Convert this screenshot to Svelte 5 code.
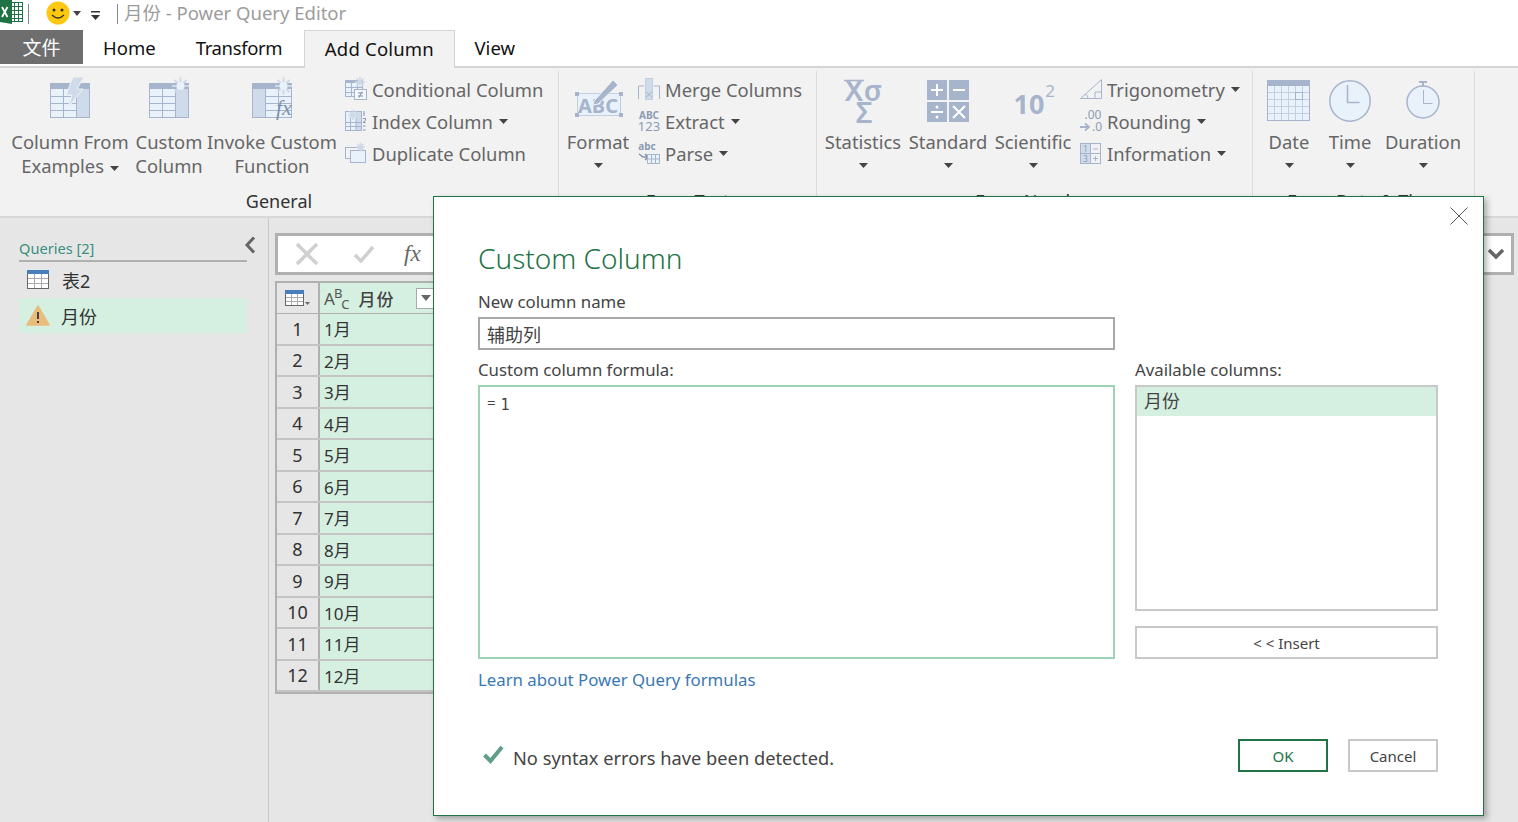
<script>
  const rows = ['1月', '2月', '3月', '4月', '5月', '6月', '7月', '8月', '9月', '10月', '11月', '12月']
</script>

{#snippet tableIcon(kind)}
  <svg class="big-icon" width="48" height="50" viewBox="0 0 48 50">
    <rect x="4.500" y="6.500" width="39" height="34" fill="#e9f1fb" stroke="#a6b4cc" />
    <rect x="4" y="6" width="40" height="6" fill="#a6b4cc" />
    {#if kind === 'fn'}
      <rect x="5" y="12" width="12" height="28" fill="#cfdaea" />
      <path d="M17.500 12v28M30.500 12v28M17 19.500h26M17 26.500h26M17 33.500h26" stroke="#a6b4cc" fill="none" />
    {:else}
      <rect x="31" y="12" width="12" height="28" fill="#cfdaea" />
      <path d="M17.500 12v28M30.500 12v28M5 19.500h26M5 26.500h26M5 33.500h26" stroke="#a6b4cc" fill="none" />
    {/if}
    {#if kind === 'bolt'}
      <path d="M27 0h11l-7 12h6L22 31l4-13h-6z" fill="#cfdaea" stroke="#f2f2f2" />
    {:else}
      <g stroke="#cfd8e6" stroke-width="2" fill="none">
        <path d="M27 9h17M35.500 0.500v17M29.500 3l12 12M41.500 3l-12 12" />
      </g>
      <circle cx="35.500" cy="9" r="4" fill="#e9f1fb" />
    {/if}
  </svg>
{/snippet}

{#snippet caret()}
  <svg class="caret" width="9" height="5" viewBox="0 0 9 5"><path d="M0 0h9L4.500 5z" fill="#444" /></svg>
{/snippet}

<div class="page">
  <header class="titlebar">
    <svg class="excel" width="24" height="25" viewBox="0 0 24 25">
      <rect x="8.500" y="2.500" width="14" height="19" fill="#fff" stroke="#1f7244" />
      <path d="M9 6.500h13M9 10.500h13M9 14.500h13M9 18.500h13M14.500 3v18M18.500 3v18" stroke="#1f7244" />
      <path d="M0 0h12v24l-12-2z" fill="#1f7244" />
      <path d="M2 7l5.500 10M7.500 7L2 17" stroke="#fff" stroke-width="1.800" />
    </svg>
    <i class="qsep"></i>
    <svg class="smile" width="24" height="24" viewBox="0 0 24 24">
      <circle cx="12" cy="12" r="11.500" fill="#fdc80f" />
      <circle cx="8" cy="9" r="1.500" fill="#333" />
      <circle cx="16" cy="9" r="1.500" fill="#333" />
      <path d="M6 14q6 6 12 0" fill="none" stroke="#333" stroke-width="1.300" />
    </svg>
    <svg class="qcaret" width="8" height="5" viewBox="0 0 8 5"><path d="M0 0h8L4 5z" fill="#444" /></svg>
    <svg class="qmore" width="9" height="9" viewBox="0 0 9 9"><path d="M0 0h9v1.500H0zM0 4h9L4.500 9z" fill="#333" /></svg>
    <i class="qsep two"></i>
    <span class="title">月份 - Power Query Editor</span>
  </header>

  <nav class="tabs">
    <div class="tab file">文件</div>
    <div class="tab">Home</div>
    <div class="tab transform">Transform</div>
    <div class="tab active">Add Column</div>
    <div class="tab">View</div>
  </nav>

  <section class="ribbon">
    <div class="group general">
      <div class="group-body">
        <div class="big b-example">
          {@render tableIcon('bolt')}
          <div class="big-label"><span>Column From</span><span>Examples {@render caret()}</span></div>
        </div>
        <div class="big b-custom">
          {@render tableIcon('star')}
          <div class="big-label"><span>Custom</span><span>Column</span></div>
        </div>
        <div class="big b-invoke">
          <div class="fx-wrap">
            {@render tableIcon('fn')}
            <span class="fx">fx</span>
          </div>
          <div class="big-label"><span>Invoke Custom</span><span>Function</span></div>
        </div>
        <div class="small-col">
          <div class="small">
            <svg width="22" height="24" viewBox="0 0 22 24">
              <rect x=".5" y="3.500" width="17" height="16" fill="#e9f1fb" stroke="#a6b4cc" />
              <rect x="0" y="3" width="18" height="3" fill="#a6b4cc" />
              <path d="M6.500 6v13M12.500 6v13M1 10.500h16M1 15.500h16" stroke="#a6b4cc" />
              <path d="M10 5h10M15 0v10M11.500 1.500l7 7M18.500 1.500l-7 7" stroke="#cfd8e6" stroke-width="1.500" />
              <rect x="9.500" y="12.500" width="12" height="10" fill="#f4f7fc" stroke="#a6b4cc" />
              <path d="M13 16h5M13 19h5M17 14.500l-3 6" stroke="#8292ad" fill="none" />
            </svg>
            <span>Conditional Column</span>
          </div>
          <div class="small">
            <svg width="22" height="24" viewBox="0 0 22 24">
              <rect x=".5" y="2.500" width="16" height="19" fill="#e9f1fb" stroke="#a6b4cc" />
              <rect x="11" y="3" width="5" height="18" fill="#cfdaea" />
              <path d="M5.500 8v13M11 8v13M1 13.500h15M1 17.500h15" stroke="#a6b4cc" />
              <path d="M3 6h10M8 1v10M4.500 2.500l7 7M11.500 2.500l-7 7" stroke="#cfd8e6" stroke-width="1.500" />
              <path d="M19 2v5M18 17h2.500M18 21h2.500M18 9.500h2.500v2l-2.500 2h2.500" stroke="#8292ad" fill="none" />
            </svg>
            <span>Index Column</span>{@render caret()}
          </div>
          <div class="small">
            <svg width="22" height="24" viewBox="0 0 22 24">
              <rect x=".5" y="6.500" width="15" height="11" fill="#f2f2f2" stroke="#a6b4cc" />
              <rect x="5.500" y="9.500" width="15" height="12" fill="#e9f1fb" stroke="#a6b4cc" />
              <path d="M11 6h9M15.500 1.500v9M12.500 3l6 6M18.500 3l-6 6" stroke="#cfd8e6" stroke-width="1.500" />
            </svg>
            <span>Duplicate Column</span>
          </div>
        </div>
      </div>
      <div class="group-label">General</div>
    </div>

    <div class="group text">
      <div class="group-body">
        <div class="big b-format">
          <svg class="big-icon" width="48" height="50" viewBox="0 0 48 50">
            <rect x="3.500" y="16.500" width="43" height="22" fill="#e9f1fb" stroke="#c3cfe1" />
            <path d="M1 15h4v4H1zM45 15h4v4h-4zM1 36h4v4H1zM45 36h4v4h-4z" fill="#a6b4cc" />
            <text x="24" y="36" class="abc">ABC</text>
            <path d="M20 24L39 3l5 5-20 19-5 1z" fill="#a6b4cc" stroke="#f2f2f2" />
          </svg>
          <div class="big-label"><span>Format</span><span class="drop">{@render caret()}</span></div>
        </div>
        <div class="small-col">
          <div class="small">
            <svg width="22" height="24" viewBox="0 0 22 24">
              <rect x="7.500" y="1.500" width="7" height="21" fill="#cfdaea" stroke="#c3cfe1" />
              <path d="M6 9H.5v13M16 9h5.500v13M8 15l3 2.500L8 20M14 15l-3 2.500 3 2.500" stroke="#a6b4cc" fill="none" />
            </svg>
            <span>Merge Columns</span>
          </div>
          <div class="small">
            <svg width="22" height="24" viewBox="0 0 22 24">
              <text x="11" y="10" class="mini">ABC</text>
              <text x="11" y="22" class="mini-num">123</text>
            </svg>
            <span>Extract</span>{@render caret()}
          </div>
          <div class="small">
            <svg width="22" height="24" viewBox="0 0 22 24">
              <text x="9" y="9" class="mini lower">abc</text>
              <path d="M1 13l4 3h5M7 13l3 3-3 3" stroke="#8292ad" stroke-width="1.500" fill="none" />
              <rect x="9.500" y="13.500" width="12" height="9" fill="#e9f1fb" stroke="#a6b4cc" />
              <path d="M13.500 14v8M17.500 14v8M10 18h11" stroke="#a6b4cc" />
            </svg>
            <span>Parse</span>{@render caret()}
          </div>
        </div>
      </div>
      <div class="group-label">From Text</div>
    </div>

    <div class="group number">
      <div class="group-body">
        <div class="big b-stat">
          <svg class="big-icon" width="48" height="50" viewBox="0 0 48 50">
            <path d="M5 3.500h20" stroke="#a6b4cc" stroke-width="1.500" />
            <text x="15" y="24" class="xs">X</text>
            <text x="34" y="24" class="xs">σ</text>
            <text x="25" y="46" class="xs">Σ</text>
          </svg>
          <div class="big-label"><span>Statistics</span><span class="drop">{@render caret()}</span></div>
        </div>
        <div class="big b-std">
          <svg class="big-icon" width="48" height="50" viewBox="0 0 48 50">
            <path d="M3 3h20v20H3zM25 3h20v20H25zM3 25h20v20H3zM25 25h20v20H25z" fill="#a6b4cc" />
            <path d="M7 13h12M13 7v12M29 13h12M7 35h12M29 29l12 12M41 29L29 41" stroke="#fff" stroke-width="2" />
            <circle cx="13" cy="30" r="1.500" fill="#fff" />
            <circle cx="13" cy="40" r="1.500" fill="#fff" />
          </svg>
          <div class="big-label"><span>Standard</span><span class="drop">{@render caret()}</span></div>
        </div>
        <div class="big b-sci">
          <svg class="big-icon" width="48" height="50" viewBox="0 0 48 50">
            <text x="20" y="37" class="ten">10</text>
            <text x="41" y="20" class="two">2</text>
          </svg>
          <div class="big-label"><span>Scientific</span><span class="drop">{@render caret()}</span></div>
        </div>
        <div class="small-col">
          <div class="small">
            <svg width="22" height="24" viewBox="0 0 22 24">
              <path d="M21.500 2.500v19H.5z" fill="#f2f2f2" stroke="#a6b4cc" />
              <path d="M15 21v-6h6.500M5 17q3 1 3 4" stroke="#a6b4cc" fill="none" />
            </svg>
            <span>Trigonometry</span>{@render caret()}
          </div>
          <div class="small">
            <svg width="22" height="24" viewBox="0 0 22 24">
              <text x="13" y="10" class="dec">.00</text>
              <text x="17" y="22" class="dec">.0</text>
              <path d="M0 18h8M5 14.500l4 3.500-4 3.500" stroke="#a6b4cc" stroke-width="1.800" fill="none" />
            </svg>
            <span>Rounding</span>{@render caret()}
          </div>
          <div class="small">
            <svg width="22" height="24" viewBox="0 0 22 24">
              <rect x=".5" y="2.500" width="20" height="20" fill="#f2f2f2" stroke="#a6b4cc" />
              <rect x="1" y="3" width="9" height="19" fill="#cfdaea" />
              <path d="M10.500 3v19M1 12.500h19M13 8h5M13 17.500h5M15.500 15v5" stroke="#a6b4cc" />
              <text x="5.500" y="10.500" class="tiny">1</text>
              <text x="5.500" y="20.500" class="tiny">3</text>
            </svg>
            <span>Information</span>{@render caret()}
          </div>
        </div>
      </div>
      <div class="group-label">From Number</div>
    </div>

    <div class="group date">
      <div class="group-body">
        <div class="big b-date">
          <svg class="big-icon" width="48" height="50" viewBox="0 0 48 50">
            <rect x="2.500" y="3.500" width="42" height="40" fill="#e9f1fb" stroke="#a6b4cc" />
            <rect x="2" y="3" width="43" height="6" fill="#a6b4cc" />
            <path d="M9.500 9v34M16.500 9v34M23.500 9v34M30.500 9v34M37.500 9v34M3 15.500h41M3 22.500h41M3 29.500h41M3 36.500h41" stroke="#c3cfe1" />
            <rect x="30.500" y="15.500" width="7" height="7" fill="none" stroke="#a6b4cc" />
          </svg>
          <div class="big-label"><span>Date</span><span class="drop">{@render caret()}</span></div>
        </div>
        <div class="big b-time">
          <svg class="big-icon" width="48" height="50" viewBox="0 0 48 50">
            <circle cx="24" cy="24" r="20.200" fill="#e9f1fb" stroke="#a6b4cc" stroke-width="1.500" />
            <path d="M21.500 8v17.500h12" fill="none" stroke="#a6b4cc" stroke-width="1.500" />
          </svg>
          <div class="big-label"><span>Time</span><span class="drop">{@render caret()}</span></div>
        </div>
        <div class="big b-dur">
          <svg class="big-icon" width="48" height="50" viewBox="0 0 48 50">
            <circle cx="24" cy="25" r="16" fill="#e9f1fb" stroke="#a6b4cc" stroke-width="1.500" />
            <path d="M20 5h8M24 5v5" stroke="#a6b4cc" stroke-width="2" />
            <path d="M24.500 13v13.500h9" fill="none" stroke="#a6b4cc" />
          </svg>
          <div class="big-label"><span>Duration</span><span class="drop">{@render caret()}</span></div>
        </div>
      </div>
      <div class="group-label">From Date &amp; Time</div>
    </div>
  </section>

  <main class="workspace">
    <aside class="queries">
      <div class="queries-head">
        <span>Queries [2]</span>
        <svg width="12" height="18" viewBox="0 0 12 18"><path d="M10 1.500L3 9l7 7.500" fill="none" stroke="#666" stroke-width="3" /></svg>
      </div>
      <div class="query">
        <svg width="23" height="19" viewBox="0 0 23 19">
          <rect x=".5" y=".5" width="21" height="18" fill="#fff" stroke="#666" />
          <rect x="0" y="0" width="22" height="4" fill="#4a7ebb" />
          <path d="M7.500 4v14M14.500 4v14M1 8.500h20M1 13.500h20" stroke="#aaa" />
        </svg>
        <span>表2</span>
      </div>
      <div class="query selected">
        <svg width="24" height="21" viewBox="0 0 24 21">
          <path d="M12 1L23 20H1z" fill="#eabc7c" stroke="#eabc7c" stroke-linejoin="round" stroke-width="1.500" />
          <path d="M12 7v7M12 16v2" stroke="#444" stroke-width="2" />
        </svg>
        <span>月份</span>
      </div>
    </aside>

    <div class="content">
      <div class="formula-bar">
        <svg width="24" height="22" viewBox="0 0 24 22"><path d="M2 1l20 20M22 1L2 21" stroke="#d0d0d0" stroke-width="3.500" /></svg>
        <svg class="fb-check" width="22" height="18" viewBox="0 0 22 18"><path d="M2 10l6 6L20 2" fill="none" stroke="#d0d0d0" stroke-width="3.500" /></svg>
        <span class="fb-fx">fx</span>
        <span class="fb-grow"></span>
        <svg class="fb-down" width="18" height="12" viewBox="0 0 18 12"><path d="M2 2l7 7 7-7" fill="none" stroke="#666" stroke-width="3.500" /></svg>
      </div>

      <div class="grid">
        <div class="grid-row head">
          <div class="num">
            <svg width="25" height="17" viewBox="0 0 25 17">
              <rect x=".5" y=".5" width="18" height="15" fill="#fff" stroke="#666" />
              <rect x="0" y="0" width="19" height="4" fill="#4a7ebb" />
              <path d="M6.500 4v11M12.500 4v11M1 7.500h17M1 11.500h17" stroke="#aaa" />
              <path d="M20 12h5l-2.500 3z" fill="#666" />
            </svg>
          </div>
          <div class="cell head-cell">
            <span class="abc-type">A<sup>B</sup><sub>C</sub></span>
            <span class="col-name">月份</span>
            <span class="filter"><svg width="10" height="6" viewBox="0 0 10 6"><path d="M0 0h10L5 6z" fill="#666" /></svg></span>
          </div>
        </div>
        {#each rows as r, i}
          <div class="grid-row">
            <div class="num">{i + 1}</div>
            <div class="cell">{r}</div>
          </div>
        {/each}
      </div>
    </div>

    <div class="dialog">
      <svg class="close" width="18" height="18" viewBox="0 0 18 18"><path d="M.5.500l17 17M17.500.500l-17 17" stroke="#555" fill="none" /></svg>
      <h1>Custom Column</h1>
      <label class="field-label" for="col-name">New column name</label>
      <input id="col-name" class="name-input" value="辅助列" />
      <div class="columns">
        <div class="col-left">
          <div class="field-label">Custom column formula:</div>
          <div class="formula"><span class="eq">=</span><span class="one">1</span></div>
        </div>
        <div class="col-right">
          <div class="field-label">Available columns:</div>
          <div class="avail"><div class="avail-item">月份</div></div>
          <div class="btn insert">&lt; &lt; Insert</div>
        </div>
      </div>
      <div class="learn">Learn about Power Query formulas</div>
      <div class="footer">
        <svg width="22" height="20" viewBox="0 0 22 20"><path d="M2.500 11l6 6L20 3" fill="none" stroke="#5f9f88" stroke-width="4" /></svg>
        <span class="status">No syntax errors have been detected.</span>
        <div class="btn ok">OK</div>
        <div class="btn cancel">Cancel</div>
      </div>
    </div>
  </main>
</div>

<style>
  :global(body) {
    margin: 0;
    background: #fff;
    overflow: hidden;
  }

  .page {
    width: 1518px;
    height: 822px;
    overflow: hidden;
    display: flex;
    flex-direction: column;
    font-family: 'Noto Sans', 'Noto Sans CJK SC', sans-serif;
    font-size: 18.400px;
    color: #666;
  }

  .titlebar {
    height: 30px;
    flex: none;
    display: flex;
    align-items: center;
    background: #fff;
  }
  .excel {
    margin-top: -5px;
  }
  .qsep {
    width: 1px;
    height: 20px;
    background: #888;
    margin-left: 4px;
    margin-top: -3px;
  }
  .qsep.two {
    margin-left: 17px;
  }
  .smile {
    margin-left: 17px;
    margin-top: -4px;
  }
  .qcaret {
    margin-left: 3px;
    margin-top: -3px;
  }
  .qmore {
    margin-left: 10px;
    margin-top: 1px;
  }
  .title {
    margin-left: 6px;
    color: #9c9c9c;
    font-size: 18.500px;
    margin-top: -6px;
  }

  .tabs {
    height: 38px;
    flex: none;
    display: flex;
    border-bottom: 2px solid #d4d4d4;
    box-sizing: border-box;
    color: #111;
    font-size: 18.500px;
  }
  .tab {
    padding: 0 20px;
    height: 36px;
    line-height: 36px;
  }
  .tab.transform {
    letter-spacing: -0.350px;
  }
  .tab.file {
    width: 83px;
    box-sizing: border-box;
    height: 34px;
    padding: 0;
    text-align: center;
    background: #6e6e6e;
    color: #fff;
    font-size: 19px;
  }
  .tab.active {
    box-sizing: border-box;
    height: 38px;
    margin-left: 2px;
    border: 1px solid #d4d4d4;
    border-bottom: none;
    background: #f2f2f2;
    padding: 0 19.500px;
    letter-spacing: 0.200px;
  }

  .ribbon {
    height: 150px;
    flex: none;
    display: flex;
    background: #f2f2f2;
    border-bottom: 2px solid #d8d8d8;
    box-sizing: border-box;
  }
  .group {
    box-sizing: border-box;
    border-right: 1px solid #dcdcdc;
    margin: 3px 0 0;
    display: flex;
    flex-direction: column;
  }
  .group.general { width: 559px; }
  .group.text { width: 258px; }
  .group.number { width: 436px; }
  .group.date { width: 222px; }
  .group-body {
    flex: 1;
    display: flex;
    min-height: 0;
  }
  .group-label {
    text-align: center;
    color: #333;
    height: 30px;
    line-height: 30px;
    font-size: 18px;
  }

  .big {
    display: flex;
    flex-direction: column;
    align-items: center;
    flex: none;
  }
  .big-icon {
    display: block;
    margin-top: 6px;
    overflow: visible;
  }
  .big-label {
    display: flex;
    flex-direction: column;
    align-items: center;
    line-height: 24px;
    margin-top: 3px;
    white-space: nowrap;
  }
  .big-label .drop {
    display: flex;
    height: 23px;
    align-items: center;
  }
  .caret {
    display: inline-block;
    vertical-align: middle;
    margin-left: 1px;
  }
  .b-example { width: 128px; margin-left: 6px; }
  .b-custom { width: 74px; margin-left: -2px; }
  .b-invoke { width: 128px; margin-left: 2px; }
  .fx-wrap { position: relative; }
  .fx {
    position: absolute;
    left: 28px;
    top: 24px;
    font: italic 22px 'Liberation Serif', serif;
    color: #8292ad;
  }

  .small-col {
    display: flex;
    flex-direction: column;
    padding-top: 2px;
    margin-left: 9px;
  }
  .small {
    height: 32px;
    display: flex;
    align-items: center;
    gap: 5px;
    white-space: nowrap;
  }
  .small svg {
    overflow: visible;
  }
  .small .caret {
    margin-left: 1px;
  }
  .b-format { width: 78px; }
  .group.text .small-col { margin-left: 1px; }
  .b-stat { width: 88px; margin-left: 2px; }
  .b-std { width: 82px; }
  .b-sci { width: 88px; }
  .group.number .small-col { margin-left: 3px; }
  .b-date { width: 72px; }
  .b-time { width: 50px; }
  .b-dur { width: 96px; }

  .abc {
    font: 700 20px 'Noto Sans', sans-serif;
    fill: #a6b4cc;
    text-anchor: middle;
  }
  .mini, .mini-num {
    font: 700 10px 'Noto Sans', sans-serif;
    fill: #8c9bb5;
    text-anchor: middle;
  }
  .mini-num {
    font-size: 13px;
    font-weight: 400;
  }
  .xs {
    font: 600 29px 'Noto Sans', sans-serif;
    fill: #a6b4cc;
    text-anchor: middle;
  }
  .ten {
    font: 700 27px 'Noto Sans', sans-serif;
    fill: #a6b4cc;
    text-anchor: middle;
  }
  .two {
    font: 400 17px 'Noto Sans', sans-serif;
    fill: #a6b4cc;
    text-anchor: middle;
  }
  .dec {
    font: 400 12px 'Noto Sans', sans-serif;
    fill: #8c9bb5;
    text-anchor: middle;
  }
  .tiny {
    font: 400 8px 'Noto Sans', sans-serif;
    fill: #8c9bb5;
    text-anchor: middle;
  }

  .workspace {
    flex: 1;
    display: flex;
    position: relative;
    background: #e6e6e6;
    min-height: 0;
  }
  .queries {
    width: 269px;
    flex: none;
    box-sizing: border-box;
    border-right: 1px solid #c8c8c8;
    padding: 18px 21px 0 19px;
  }
  .queries-head {
    height: 24px;
    display: flex;
    justify-content: space-between;
    align-items: center;
    border-bottom: 2px solid #b0b0b0;
    font-size: 14.600px;
    color: #3a8f80;
    position: relative;
  }
  .queries-head svg {
    position: absolute;
    right: -9px;
    top: 0;
  }
  .query {
    height: 33px;
    display: flex;
    align-items: center;
    gap: 12px;
    padding-left: 8px;
    color: #333;
    font-size: 18px;
    margin-top: 1px;
  }
  .query.selected {
    height: 35px;
    margin-top: 2px;
    padding-left: 7px;
    gap: 11px;
    background: #d5efe1;
  }

  .content {
    flex: 1;
    padding: 15px 4px 0 6px;
    min-width: 0;
  }
  .formula-bar {
    height: 42px;
    box-sizing: border-box;
    border: 3px solid #b0b0b0;
    background: #fff;
    display: flex;
    align-items: center;
    padding: 0 6px 0 17px;
  }
  .fb-check {
    margin-left: 34px;
  }
  .fb-fx {
    font: italic 23px 'Liberation Serif', serif;
    color: #666;
    margin-left: 29px;
  }
  .fb-grow { flex: 1; }

  .grid {
    margin-top: 6px;
    width: 200px;
    box-sizing: border-box;
    border: 2px solid #b0b0b0;
    border-right: none;
    background: #e6e6e6;
  }
  .grid-row {
    display: flex;
    height: 31.500px;
    box-sizing: border-box;
    border-bottom: 2px solid #c4c4c4;
  }
  .grid-row.head {
    height: 31px;
    border-bottom: 1px solid #b0b0b0;
  }
  .num {
    width: 43px;
    flex: none;
    box-sizing: border-box;
    border-right: 2px solid #b0b0b0;
    display: flex;
    align-items: center;
    justify-content: center;
    color: #333;
    font-size: 18px;
  }
  .cell {
    flex: 1;
    background: #d5efe1;
    display: flex;
    align-items: center;
    padding-left: 4px;
    color: #333;
    font-size: 17px;
  }
  .head-cell {
    gap: 10px;
  }
  .abc-type {
    font-size: 17px;
    color: #555;
    letter-spacing: -1px;
  }
  .abc-type sup, .abc-type sub {
    font-size: 13px;
    line-height: 0;
  }
  .col-name {
    font-weight: 500;
    font-size: 17px;
    letter-spacing: 1px;
    color: #444;
  }
  .filter {
    margin-left: 11px;
    width: 20px;
    height: 21px;
    background: #fff;
    border: 1px solid #aaa;
    display: flex;
    align-items: center;
    justify-content: center;
    box-sizing: border-box;
    flex: none;
  }

  .dialog {
    position: absolute;
    left: 433px;
    top: -22px;
    width: 1051px;
    height: 620px;
    box-sizing: border-box;
    background: #fff;
    border: 1px solid #217346;
    box-shadow: 3px 3px 6px rgba(0, 0, 0, 0.3);
    padding: 0 45px 0 44px;
    color: #444;
  }
  .close {
    position: absolute;
    right: 15px;
    top: 10px;
  }
  h1 {
    margin: 40px 0 0;
    font-size: 28px;
    line-height: 42px;
    font-weight: 300;
    color: #217346;
  }
  .field-label {
    display: block;
    font-size: 16.800px;
    line-height: 24px;
    color: #444;
  }
  label.field-label {
    margin-top: 11px;
  }
  .name-input {
    display: block;
    width: 637px;
    height: 33px;
    box-sizing: border-box;
    margin: 3px 0 0;
    padding: 0 7px;
    border: 2px solid #a8a8a8;
    outline: none;
    font: inherit;
    font-size: 18px;
    color: #444;
  }
  .columns {
    display: grid;
    grid-template-columns: 637px 303px;
    column-gap: 20px;
    margin-top: 8px;
  }
  .formula {
    margin-top: 3px;
    height: 274px;
    box-sizing: border-box;
    border: 2px solid #9ed4b6;
    padding: 5px 7px;
    display: flex;
    gap: 5px;
    align-items: flex-start;
  }
  .eq {
    font-size: 15px;
    line-height: 20px;
  }
  .one {
    font: 15px/26px 'DejaVu Sans Mono', monospace;
  }
  .avail {
    margin-top: 3px;
    height: 226px;
    box-sizing: border-box;
    border: 2px solid #c8c8c8;
  }
  .avail-item {
    height: 29px;
    line-height: 29px;
    background: #d5efe1;
    padding-left: 7px;
    font-size: 18px;
  }
  .btn {
    box-sizing: border-box;
    height: 33px;
    border: 2px solid #c8c8c8;
    display: flex;
    align-items: center;
    justify-content: center;
    font-size: 15px;
    color: #444;
  }
  .insert {
    margin-top: 15px;
  }
  .learn {
    margin-top: 8px;
    line-height: 25px;
    font-size: 16.800px;
    color: #3a78b4;
  }
  .footer {
    display: flex;
    align-items: center;
    margin-top: 47px;
    height: 33px;
  }
  .footer svg {
    margin-left: 4px;
    margin-top: -3px;
  }
  .status {
    margin-left: 9px;
    margin-top: 4px;
    font-size: 18.250px;
    flex: 1;
  }
  .btn.ok, .btn.cancel {
    width: 90px;
  }
  .btn.ok {
    border-color: #217346;
    color: #217346;
    margin-right: 20px;
  }
</style>
